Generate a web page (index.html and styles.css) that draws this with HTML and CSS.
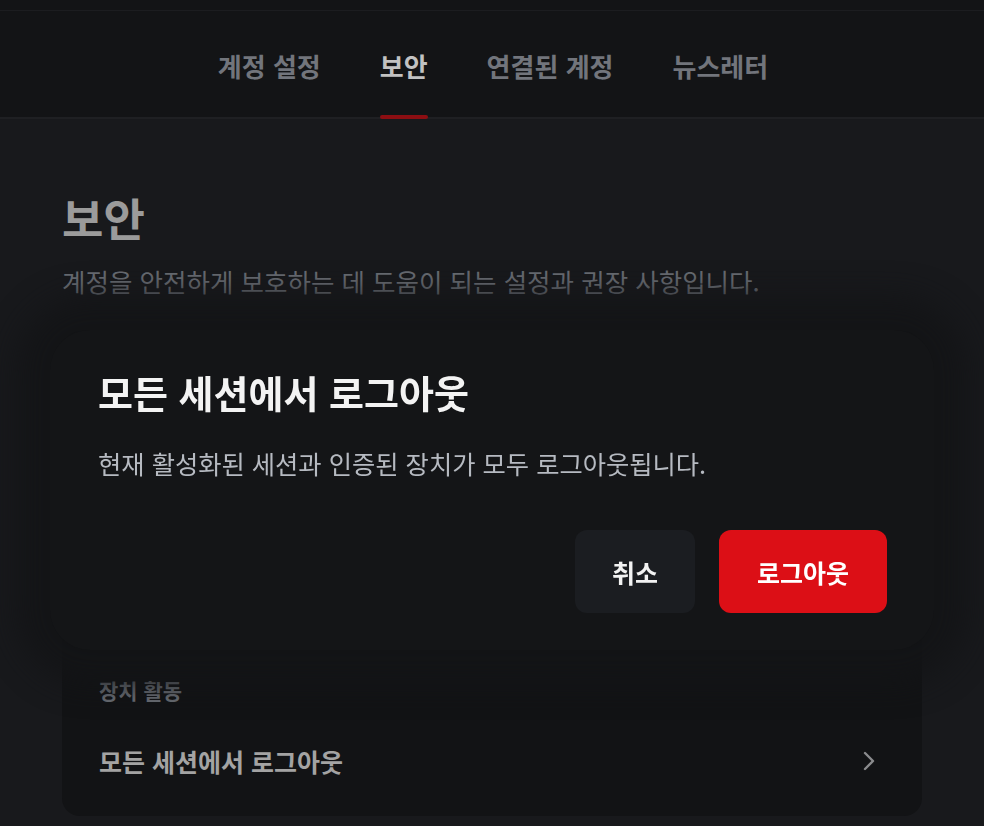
FILE: index.html
```html
<!DOCTYPE html>
<html lang="ko">

<head>
    <meta charset="UTF-8">
    <meta name="viewport" content="width=device-width, initial-scale=1.0">
    <title>보안</title>
    <link rel="stylesheet" href="styles.css">
</head>

<body>
    <div class="topbar"></div>
    <div class="tabs">
        <a class="tab">계정 설정</a>
        <a class="tab active">보안</a>
        <a class="tab">연결된 계정</a>
        <a class="tab">뉴스레터</a>
    </div>

    <div class="page">
        <h1 class="title">보안</h1>
        <p class="desc">계정을 안전하게 보호하는 데 도움이 되는 설정과 권장 사항입니다.</p>

        <div class="card">
            <div class="label">장치 활동</div>
            <div class="row">
                <span>모든 세션에서 로그아웃</span>
                <svg class="arrow" width="12" height="20" viewBox="0 0 12 20">
                    <path d="M2 2 L10 10 L2 18" fill="none" stroke="#8a8b8d" stroke-width="2.4"
                        stroke-linecap="round" stroke-linejoin="round" />
                </svg>
            </div>
        </div>
    </div>

    <div class="mask">
        <div class="dialog">
            <div class="dialog-title">모든 세션에서 로그아웃</div>
            <div class="dialog-text">현재 활성화된 세션과 인증된 장치가 모두 로그아웃됩니다.</div>
            <div class="dialog-btns">
                <button class="btn cancel">취소</button>
                <button class="btn logout">로그아웃</button>
            </div>
        </div>
    </div>
</body>

</html>
```
FILE: styles.css
```css
body,
h1,
p {
    margin: 0;
    padding: 0;
}

body {
    background-color: #18191c;
    font-family: "Noto Sans CJK KR", "Noto Sans", sans-serif;
    height: 826px;
    overflow: hidden;
}

.topbar {
    height: 10px;
    background-color: #131416;
    border-bottom: 1px solid #1c1d20;
}

.tabs {
    height: 106px;
    background-color: #131416;
    border-bottom: 2px solid #1f2023;
    display: flex;
    justify-content: center;
    gap: 59px;
    padding-left: 2px;
}

.tab {
    position: relative;
    display: flex;
    align-items: center;
    padding-top: 2px;
    font-size: 26px;
    font-weight: bold;
    color: #72757c;
    cursor: pointer;
}

.tab.active {
    color: #c2c2c2;
}

.tab.active::after {
    content: "";
    position: absolute;
    left: 0;
    right: 0;
    bottom: -2px;
    height: 4px;
    border-radius: 2px;
    background-color: #8c0e12;
}

.page {
    padding: 0 62px;
}

.title {
    margin-top: 74px;
    font-size: 45px;
    line-height: 50px;
    color: #9b9b9b;
}

.desc {
    margin-top: 20px;
    font-size: 25.5px;
    line-height: 36px;
    color: #686c73;
}

.card {
    margin-top: 32px;
    height: 485px;
    box-sizing: border-box;
    background-color: #121315;
    border-radius: 18px;
    padding: 344px 37px 0 37px;
}

.label {
    font-size: 21px;
    font-weight: bold;
    line-height: 30px;
    color: #6b6f76;
}

.row {
    display: flex;
    justify-content: space-between;
    align-items: center;
    height: 84px;
    margin-top: 14px;
    font-size: 25px;
    font-weight: bold;
    color: #a3a3a3;
}

.arrow {
    margin-right: 10px;
}

.mask {
    position: fixed;
    left: 0;
    top: 0;
    right: 0;
    bottom: 0;
    display: flex;
    justify-content: center;
    align-items: flex-start;
    padding-top: 330px;
}

.dialog {
    width: 884px;
    box-sizing: border-box;
    padding: 36px 47px 37px 48px;
    background-color: #141517;
    border-radius: 40px;
    box-shadow: 0 0 30px 34px rgba(20, 21, 23, 0.92);
}

.dialog-title {
    font-size: 38px;
    font-weight: bold;
    line-height: 52px;
    color: #f3f3f3;
}

.dialog-text {
    margin-top: 27px;
    font-size: 25.3px;
    line-height: 36px;
    color: #b6bac1;
}

.dialog-btns {
    margin-top: 49px;
    display: flex;
    justify-content: flex-end;
    gap: 24px;
}

.btn {
    height: 83px;
    border: none;
    border-radius: 12px;
    font-family: "Noto Sans CJK KR", "Noto Sans", sans-serif;
    font-size: 25px;
    font-weight: bold;
    color: #f2f2f2;
    cursor: pointer;
}

.cancel {
    width: 120px;
    background-color: #1b1d21;
}

.logout {
    width: 168px;
    background-color: #dc0f16;
    color: #fff;
}
```
